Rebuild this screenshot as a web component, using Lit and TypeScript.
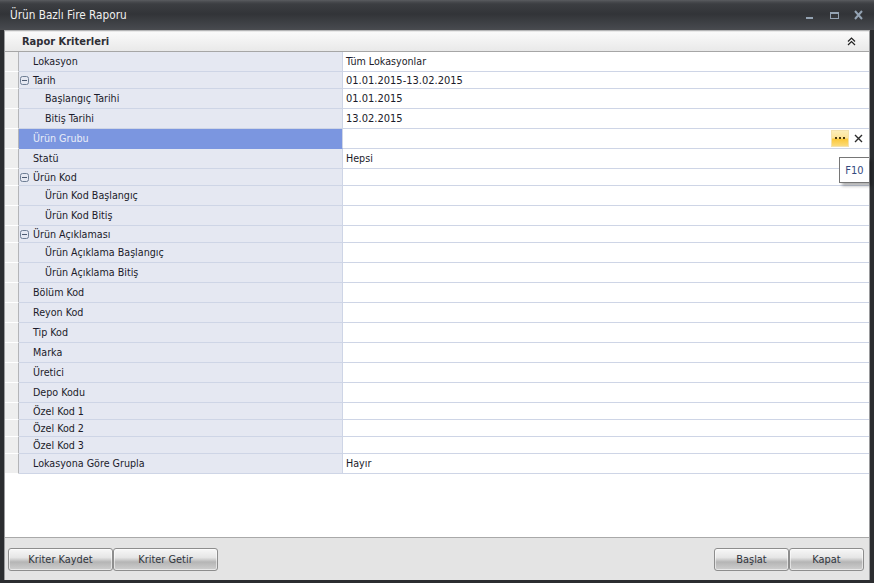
import { LitElement, html, css, svg } from "lit";
import { customElement } from "lit/decorators.js";

type Row = { n: string; v?: string; s?: boolean; lvl?: number; exp?: boolean; sel?: boolean };
const rows: Row[] = [
  { n: "Lokasyon", v: "Tüm Lokasyonlar" },
  { n: "Tarih", v: "01.01.2015-13.02.2015", s: true, exp: true },
  { n: "Başlangıç Tarihi", v: "01.01.2015", lvl: 1 },
  { n: "Bitiş Tarihi", v: "13.02.2015", lvl: 1 },
  { n: "Ürün Grubu", sel: true },
  { n: "Statü", v: "Hepsi" },
  { n: "Ürün Kod", s: true, exp: true },
  { n: "Ürün Kod Başlangıç", lvl: 1 },
  { n: "Ürün Kod Bitiş", lvl: 1 },
  { n: "Ürün Açıklaması", s: true, exp: true },
  { n: "Ürün Açıklama Başlangıç", lvl: 1 },
  { n: "Ürün Açıklama Bitiş", lvl: 1 },
  { n: "Bölüm Kod" },
  { n: "Reyon Kod" },
  { n: "Tip Kod" },
  { n: "Marka" },
  { n: "Üretici" },
  { n: "Depo Kodu" },
  { n: "Özel Kod 1", s: true },
  { n: "Özel Kod 2", s: true },
  { n: "Özel Kod 3", s: true },
  { n: "Lokasyona Göre Grupla", v: "Hayır" },
];

@customElement("app-root")
export class AppRoot extends LitElement {
  static styles = css`
    :host { display: block; width: 874px; height: 583px; font-family: "DejaVu Sans Condensed", "DejaVu Sans", sans-serif; font-stretch: condensed; font-size: 10.65px; color: #1b1b2a; }
    .win { width: 874px; height: 583px; display: flex; flex-direction: column; background: #2b2d30; position: relative; overflow: hidden; }
    .title { height: 30px; flex: none; display: flex; align-items: center; padding: 0 10px; color: #f0f0f0; font-size: 11.7px; box-sizing: border-box;
      background: linear-gradient(#5a5c60 0, #47494d 2px, #3c3e42 4px, #323438 14px, #45484d 28px, #4a4c50 30px); }
    .title .t { flex: 1; }
    .wbtns svg { display: block; }
    .body { flex: 1; display: flex; flex-direction: column; margin: 0 4px 3px 4px; background: #fff; border: 1px solid #9a9b9d; border-bottom: none; border-top-color: #b4b5b6; min-height: 0; box-sizing: border-box; }
    .main { height: 507px; flex: none; background: #fff; border-bottom: 1px solid #a9a9a9; box-sizing: border-box; }
    .ghead { height: 21px; display: flex; align-items: center; justify-content: space-between; padding: 0 13px 0 17px; font-weight: 700; font-size: 11px; color: #2e2e35;
      background: linear-gradient(#fafafa, #e9e9e9); border-bottom: 1px solid #a6a6a6; box-sizing: border-box; border-top: 1px solid #e8e8e8; }
    .ghead svg { display: block; }
    .row { display: flex; height: 20px; box-sizing: border-box; }
    .row.s { height: 17px; }
    .gut { flex: none; background: #eeeeee; border-right: 1px solid #b4b5b8; border-bottom: 1px solid #ffffff; width: 13px; }
    .name { width: 324px; flex: none; box-sizing: border-box; background: #e5e8f2; border-bottom: 1px solid #ced5e6; border-right: 1px solid #ced5e6; display: flex; align-items: center; position: relative; padding-left: 14px; white-space: nowrap; }
    .name.l1 { padding-left: 26px; }
    .row.sel .name { background: #7b96e0; color: #e9edf8; border-bottom-color: #7b96e0; }
    .name svg { position: absolute; left: 1px; top: 4px; }
    .val { flex: 1; min-width: 0; border-bottom: 1px solid #ced5e6; display: flex; align-items: center; padding-left: 3px; box-sizing: border-box; background: #fff; white-space: nowrap; }
    .num { font-size: 11px; }
    .row.sel .val { justify-content: flex-end; padding-right: 6px; gap: 5px; }
    .dots { width: 18px; height: 17px; box-sizing: border-box; display: flex; align-items: center; justify-content: center; gap: 2px; padding-bottom: 2px;
      background: linear-gradient(#fdeeb8 0, #fde49a 45%, #fbc83c 55%, #fcdc7c 100%); border: 1px solid #f4e2ae; }
    .dots i { width: 2px; height: 2px; background: #4a3a10; display: block; }
    .tip { position: absolute; left: 839px; top: 157px; width: 30px; height: 26px; box-sizing: border-box; background: #fff; border: 1px solid #767676; border-right: none; color: #354a80; font-size: 11px; display: flex; align-items: center; justify-content: center; box-shadow: 3px 3px 3px rgba(0,0,0,.3); }
    .foot { flex: 1; background: #e4e4e4; display: flex; justify-content: space-between; padding: 10px 5px 0 3px; box-sizing: border-box; }
    .grp { display: flex; }
    button { font: inherit; font-size: 10.9px; color: #30343c; height: 23px; width: 105px; padding: 0 0 1px 0; border: 1px solid #8d8d8d; border-radius: 3px; box-sizing: border-box;
      background: linear-gradient(#f7f7f7 0, #e6e6e6 40%, #b5b5b5 62%, #cfcfcf 100%); box-shadow: inset 0 0 0 1px rgba(255,255,255,.55); }
    button.r { width: 75px; }
  `;

  render() {
    return html`<div class="win">
      <div class="title">
        <span class="t">Ürün Bazlı Fire Raporu</span>
        <div class="wbtns">
          <svg width="64" height="16" viewBox="0 0 64 16" fill="none">
            <rect x="6" y="10" width="7" height="2" fill="#94a3b3"/>
            <rect x="30.5" y="5.5" width="8" height="6" fill="none" stroke="#94a3b3"/>
            <rect x="30" y="5" width="9" height="2" fill="#94a3b3"/>
            <path d="M55 4l7 8M62 4l-7 8" stroke="#94a3b3" stroke-width="2"/>
          </svg>
        </div>
      </div>
      <div class="body">
        <div class="main">
          <div class="ghead"><span>Rapor Kriterleri</span>
            <svg width="9" height="9" viewBox="0 0 9 9" fill="none" stroke="#222" stroke-width="1.2"><path d="M1 4.5l3.5-3.5 3.5 3.5M1 8l3.5-3.5 3.5 3.5"/></svg>
          </div>
          ${rows.map((r) => html`<div class="row ${r.s ? "s" : ""} ${r.sel ? "sel" : ""}">
            <div class="gut"></div>
            <div class="name ${r.lvl ? "l1" : ""}">
              ${r.exp ? svg`<svg width="9" height="9" viewBox="0 0 9 9"><rect x=".5" y=".5" width="8" height="8" rx="2" fill="#e5e8f2" stroke="#6f7f95"/><path d="M2 4.5h5" stroke="#4c5a70"/></svg>` : ""}
              <span>${r.n}</span>
            </div>
            <div class="val">${r.sel
              ? html`<div class="dots"><i></i><i></i><i></i></div><svg width="9" height="9" viewBox="0 0 9 9" stroke="#2c2c2c" stroke-width="1.4"><path d="M1 1l7 7M8 1l-7 7"/></svg>`
              : html`<span class="${/^\d/.test(r.v ?? "") ? "num" : ""}">${r.v ?? ""}</span>`}</div>
          </div>`)}
        </div>
        <div class="foot">
          <div class="grp"><button>Kriter Kaydet</button><button>Kriter Getir</button></div>
          <div class="grp"><button class="r">Başlat</button><button class="r">Kapat</button></div>
        </div>
      </div>
      <div class="tip">F10</div>
    </div>`;
  }
}
